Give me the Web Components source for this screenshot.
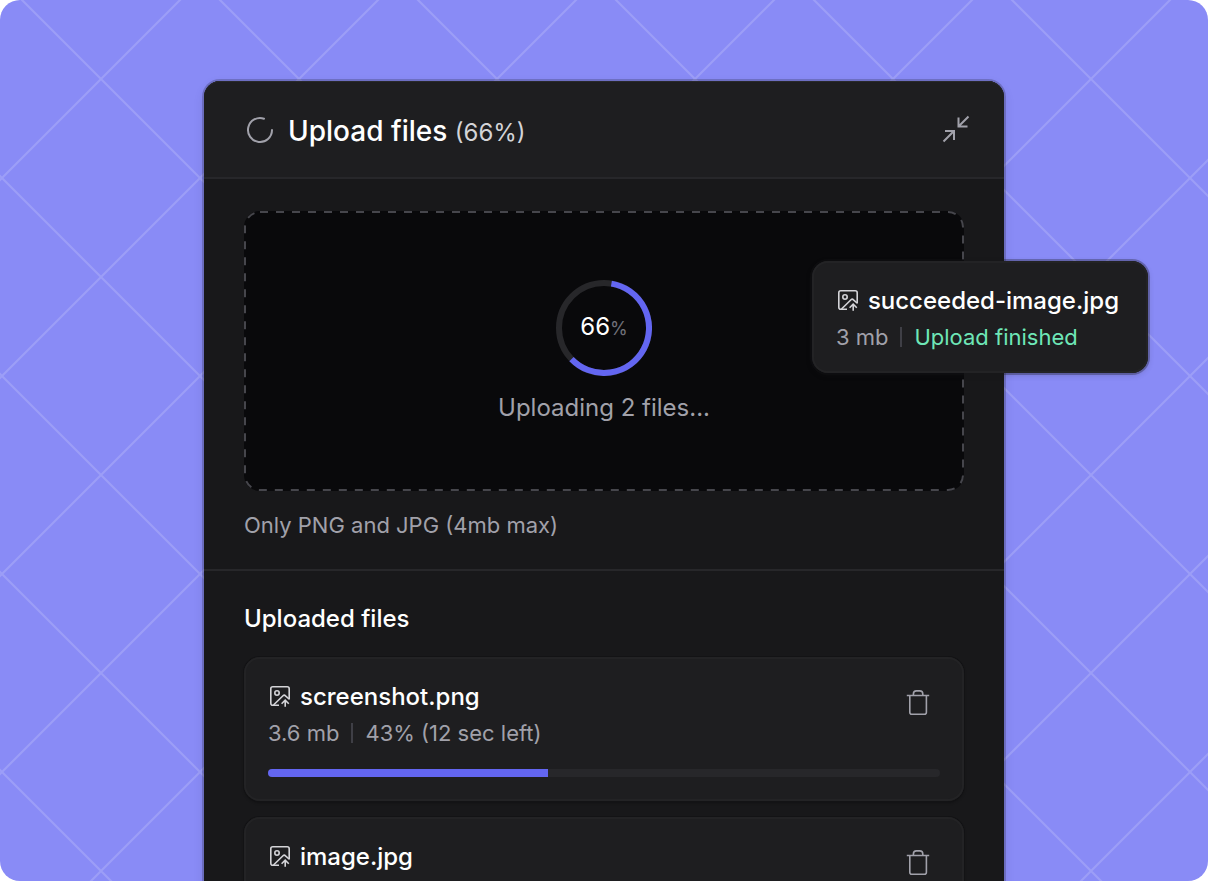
<!DOCTYPE html>
<html lang="en">
<head>
<meta charset="utf-8">
<meta name="viewport" content="width=device-width, initial-scale=1">
<title>Upload files</title>
<style>
  :root {
    --surface: #18181a;
    --raised: #1e1e20;
    --well: #09090b;
    --line: #27272a;
    --text: #fff;
    --muted: #a1a1aa;
    --faint: #71717a;
    --rule: #3f3f46;
    --accent: #6366f1;
    --success: #6ee7b7;
  }
  body {
    margin: 0;
    background: #fff;
    color: var(--text);
    font-family: Inter, "Liberation Sans", sans-serif;
    font-size: 22px;
    line-height: 32px;
  }
</style>
</head>
<body>
<upload-stage>
  <upload-panel heading="Upload files" percent="66">
    <drop-zone slot="drop" percent="66">Uploading 2 files...</drop-zone>
    <span slot="hint">Only PNG and JPG (4mb max)</span>
    <file-card name="screenshot.png" size="3.6 mb" progress="41.67" removable>43% (12 sec left)</file-card>
    <file-card name="image.jpg" removable></file-card>
    <file-card slot="toast" name="succeeded-image.jpg" size="3 mb" floating>Upload finished</file-card>
  </upload-panel>
</upload-stage>

<script>
class UploadStage extends HTMLElement {
  connectedCallback() {
    const shadow = this.attachShadow({ mode: 'open' })
    shadow.innerHTML = `
<style>
:host {
  display: grid;
  box-sizing: border-box;
  height: 100vh;
  padding: 81px 60px 0;
  position: relative;
  overflow: hidden;
  border-radius: 20px;
  background: #898bf6;
}
.grid { position: absolute; inset: 0; width: 100%; height: 100%; }
</style>
<svg class="grid" aria-hidden="true">
  <defs>
    <pattern id="lattice" x="2" y="-20" width="198" height="198" patternUnits="userSpaceOnUse">
      <path d="M-2-2 200 200M200-2-2 200" fill="none" stroke="#fff" stroke-opacity=".16" stroke-width="2"/>
    </pattern>
  </defs>
  <rect width="100%" height="100%" fill="url(#lattice)"/>
</svg>
<slot></slot>`
  }
}

class UploadPanel extends HTMLElement {
  connectedCallback() {
    const shadow = this.attachShadow({ mode: 'open' })
    shadow.innerHTML = `
<style>
:host {
  display: block;
  position: relative;
  width: 100%;
  max-width: 800px;
  justify-self: center;
}
.panel {
  min-height: 100%;
  border-radius: 16px 16px 0 0;
  background: var(--surface);
  box-shadow: 0 0 0 2px rgba(24, 24, 27, .22), 0 4px 12px rgba(24, 24, 27, .1);
}
header {
  display: flex;
  align-items: center;
  gap: 12px;
  height: 96px;
  padding: 0 32px 0 40px;
  border-radius: 16px 16px 0 0;
  border-bottom: 2px solid var(--line);
  background: var(--raised);
  box-shadow: inset 0 1px 0 #29292b;
}
h1 { margin: 0; padding-top: 6px; flex: 1; font-size: 28px; font-weight: 500; line-height: 36px; }
h1 small { font-size: 24px; font-weight: 400; color: #d4d4d8; }
h2 { margin: 0 0 22px; font-size: 24px; font-weight: 500; line-height: 32px; }
button {
  display: flex;
  padding: 0;
  border: 0;
  background: none;
  color: var(--muted);
  cursor: pointer;
}
svg { display: block; fill: none; stroke: currentColor; stroke-width: 2; }
.spinner { color: var(--muted); }
section { padding: 32px 40px; }
.drop { padding-bottom: 26px; border-bottom: 2px solid var(--line); }
.hint { margin: 16px 0 0; line-height: 36px; color: var(--muted); }
.list { display: flex; flex-direction: column; gap: 16px; }
::slotted([slot="toast"]) { position: absolute; top: 180px; right: -144px; }
</style>
<div class="panel">
  <header>
    <svg class="spinner" width="32" height="32" viewBox="0 0 32 32" aria-hidden="true">
      <path d="M20 5.7A12 12 0 1 0 28 17" stroke-linecap="round"/>
    </svg>
    <h1>${this.getAttribute('heading')} <small>(${this.getAttribute('percent')}%)</small></h1>
    <button type="button" aria-label="Minimize">
      <svg width="32" height="32" viewBox="0 0 32 32" aria-hidden="true">
        <path d="M28.5 3.5 18.5 13.5M18.5 4.5V13.5H27.5M3.5 28.5 14 18M5 18H14V27"/>
      </svg>
    </button>
  </header>
  <section class="drop">
    <slot name="drop"></slot>
    <p class="hint"><slot name="hint"></slot></p>
  </section>
  <section>
    <h2>Uploaded files</h2>
    <div class="list"><slot></slot></div>
  </section>
</div>
<slot name="toast"></slot>`
  }
}

class DropZone extends HTMLElement {
  connectedCallback() {
    const shadow = this.attachShadow({ mode: 'open' })
    shadow.innerHTML = `
<style>
:host {
  display: flex;
  flex-direction: column;
  align-items: center;
  justify-content: center;
  gap: 16px;
  box-sizing: border-box;
  position: relative;
  min-height: 280px;
  padding-top: 2px;
  border-radius: 16px;
  background: var(--well);
  color: var(--muted);
  font-size: 24px;
}
.dashes { position: absolute; inset: 0; width: 100%; height: 100%; overflow: hidden; }
.dashes rect {
  x: 1px; y: 1px;
  width: calc(100% - 2px);
  height: calc(100% - 2px);
  fill: none;
  stroke: #46464c;
  stroke-width: 2;
  stroke-dasharray: 8 8;
}
.ring { display: grid; place-items: center; }
.ring > * { grid-area: 1 / 1; }
.ring svg { fill: none; stroke-width: 6; }
.track { stroke: var(--line); }
.value { stroke: var(--accent); }
.label { color: var(--text); }
.label small { font-size: 18px; color: var(--faint); }
</style>
<svg class="dashes" aria-hidden="true"><rect rx="15"/></svg>
<div class="ring">
  <svg width="96" height="96" viewBox="0 0 96 96" aria-hidden="true">
    <circle class="track" cx="48" cy="48" r="45"/>
    <path class="value" d="M55.4 3.6A45 45 0 1 1 15.5 79.1"/>
  </svg>
  <span class="label">${this.getAttribute('percent')}<small>%</small></span>
</div>
<div><slot></slot></div>`
  }
}

class FileCard extends HTMLElement {
  connectedCallback() {
    const shadow = this.attachShadow({ mode: 'open' })
    shadow.innerHTML = `<style>${this.#css()}</style>
<div class="row">
  <div class="info">
    <div class="name">${this.#imageIcon()}<span>${this.getAttribute('name')}</span></div>
    ${this.hasAttribute('size') ? this.#meta() : ''}
  </div>
  ${this.hasAttribute('removable') ? this.#removeButton() : ''}
</div>
${this.hasAttribute('progress') ? this.#bar() : ''}`
  }
  #css() { return `
:host {
  display: block;
  padding: 24px;
  border-radius: 16px;
  background: var(--raised);
  box-shadow: inset 0 0 0 2px #232325, 0 0 0 1px #131315, 0 2px 3px rgba(0, 0, 0, .3);
}
:host([floating]) {
  padding: 24px 30px 20px 24px;
  box-shadow: inset 0 0 0 2px #232325, 0 0 0 2px rgba(24, 24, 27, .3), 0 2px 6px rgba(24, 24, 27, .2);
}
:host([floating]) .status { color: var(--success); }
.row { display: flex; justify-content: space-between; align-items: flex-start; }
.name { display: flex; align-items: center; gap: 8px; font-size: 24px; font-weight: 500; white-space: nowrap; }
.name svg { margin-bottom: 2px; color: #d4d4d8; }
.meta { display: flex; align-items: center; gap: 12px; margin-top: 4px; color: var(--muted); white-space: nowrap; }
.meta i { width: 2px; height: 20px; background: var(--rule); }
:host([floating]) { padding-right: 29px; }
svg { display: block; fill: none; stroke: currentColor; }
button {
  display: grid;
  place-items: center;
  width: 44px;
  height: 44px;
  padding: 0;
  border: 0;
  background: none;
  color: var(--muted);
  cursor: pointer;
}
progress {
  display: block;
  appearance: none;
  width: 100%;
  height: 8px;
  margin-top: 20px;
  border: 0;
  border-radius: 4px;
  overflow: hidden;
}
progress::-webkit-progress-bar { background: var(--line); }
progress::-webkit-progress-value { background: var(--accent); }
` }
  #meta() { return `<div class="meta"><span>${this.getAttribute('size')}</span><i></i><span class="status"><slot></slot></span></div>` }
  #imageIcon() { return `
<svg width="24" height="24" viewBox="0 0 24 24" stroke-width="1.6" aria-hidden="true">
  <path d="M11 21.2H4.8A2 2 0 0 1 2.8 19.2V4.8A2 2 0 0 1 4.8 2.8H19.2A2 2 0 0 1 21.2 4.8V15.5"/>
  <circle cx="9" cy="9" r="2.2"/>
  <path d="M5.5 21 15 11.8A1.8 1.8 0 0 1 17.5 11.8L21 15M17.2 22.8V16.5M13.6 19.7 17.2 16.2 20.8 19.7"/>
</svg>` }
  #removeButton() { return `
<button type="button" aria-label="Remove ${this.getAttribute('name')}">
  <svg width="32" height="32" viewBox="0 0 32 32" stroke-width="1.6" aria-hidden="true">
    <path d="M4.8 8.5H27.2M7.8 8.5V25.3A2 2 0 0 0 9.8 27.3H22.4A2 2 0 0 0 24.4 25.3V8.5M11.4 8.5V6.9A3 3 0 0 1 14.4 3.9H17.8A3 3 0 0 1 20.8 6.9V8.5"/>
  </svg>
</button>` }
  #bar() { return `<progress max="100" value="${this.getAttribute('progress')}" aria-label="${this.getAttribute('name')}"></progress>` }
}

customElements.define('upload-stage', UploadStage)
customElements.define('upload-panel', UploadPanel)
customElements.define('drop-zone', DropZone)
customElements.define('file-card', FileCard)
</script>
</body>
</html>
